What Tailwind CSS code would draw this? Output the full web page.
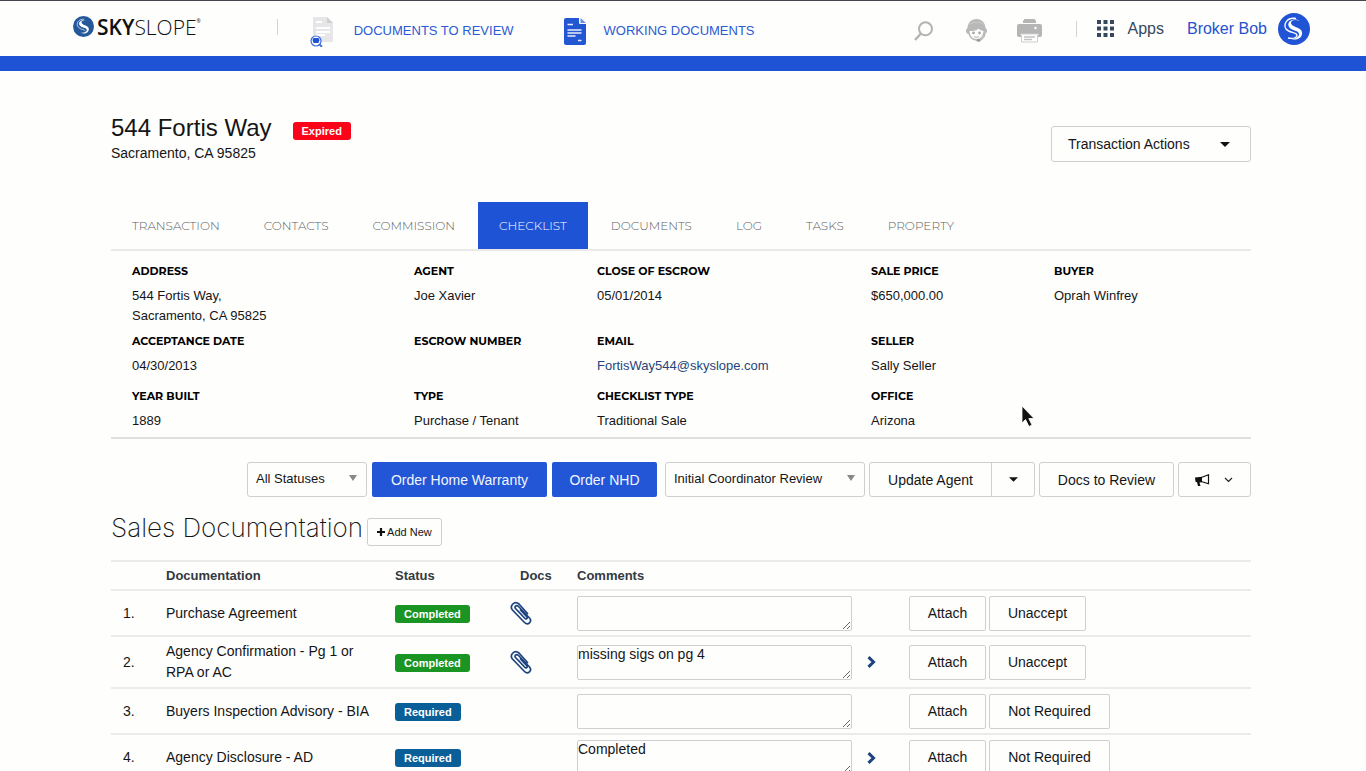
<!DOCTYPE html>
<html lang="en">
<head>
    <meta charset="UTF-8">
    <meta name="viewport" content="width=device-width, initial-scale=1.0">
    <title>544 Fortis Way - Checklist</title>
    <script src="https://cdn.jsdelivr.net/npm/@tailwindcss/browser@4"></script>
</head>
<body class="h-screen overflow-hidden bg-[#fefefd] font-['Liberation_Sans',Arial,sans-serif] text-[13px] leading-5 text-[#151515]">

    <!-- Header -->
    <header class="flex h-[56px] items-center justify-between border-t border-[#45454d] pl-[73px] pr-[56px]">
        <div class="flex items-center">
            <a href="#" class="flex items-center gap-[3px] pb-1 font-['Open_Sans',sans-serif] text-[21px] leading-6">
                <svg class="size-[21px]" viewBox="0 0 32 32" aria-hidden="true">
                    <circle cx="16" cy="16" r="16" fill="#25579b"/>
                    <path d="M21 8C14 4 7 9 10 14c2 4 12 3 11 8-1 3-6 4-10 3 7 4 14 0 13-6-1-5-11-5-11-9 0-3 4-4 8-2z" fill="#fff"/>
                    <path d="M17 5C8 4 4 12 8 17c3 4 10 3 11 6" fill="none" stroke="#fff" stroke-width="1"/>
                </svg>
                <span class="flex text-[#111]"><span class="font-semibold">SKY</span><span class="font-light">SLOPE</span><span class="text-[5px] leading-3">®</span></span>
            </a>
            <span class="mb-1 ml-[76px] h-4 w-px bg-[#d4d4d4]"></span>
            <nav class="flex items-center pt-[5px] text-[#2c5bd2]">
                <a href="#" class="ml-8 flex items-center gap-5">
                    <svg class="h-[31px] w-6" viewBox="0 0 24 31" aria-hidden="true">
                        <path d="M4 1h13l6 6v18a1 1 0 0 1-1 1H4a1 1 0 0 1-1-1V2a1 1 0 0 1 1-1z" fill="#e6e6e9"/>
                        <path d="M17 1v6h6z" fill="#cfcfd3"/>
                        <path d="M6 6h6M6 12h14M6 16h14M6 19h9" stroke="#fff" stroke-width="2"/>
                        <circle cx="6" cy="25" r="5" fill="#fff" stroke="#3b6ad9" stroke-width="1.2"/>
                        <path d="M3.500 22h5l1 2-1 3h-5l-1-3z" fill="#1f53d6"/>
                        <path d="M9.500 28.500l2.500 2.500" stroke="#3b6ad9" stroke-width="1.800"/>
                    </svg>
                    DOCUMENTS TO REVIEW
                </a>
                <a href="#" class="ml-[50px] flex items-center gap-[18px]">
                    <svg class="h-[27px] w-[22px]" viewBox="0 0 22 27" aria-hidden="true">
                        <path d="M2 0h13v5a1 1 0 0 0 1 1h6v19a2 2 0 0 1-2 2H2a2 2 0 0 1-2-2V2a2 2 0 0 1 2-2z" fill="#2356d3"/>
                        <path d="M16.500 0L22 5h-5.500z" fill="#6d90e4"/>
                        <path d="M3.500 6.500h5.500M3.500 12h14M3.500 15h14M3.500 18h8M14 22.500h3.500" stroke="#e8eefb" stroke-width="1.700"/>
                    </svg>
                    WORKING DOCUMENTS
                </a>
            </nav>
        </div>
        <div class="flex items-center text-base">
            <button type="button" aria-label="Search" class="pt-1">
                <svg class="size-5" viewBox="0 0 20 20" fill="none" stroke="#b3b3b3" aria-hidden="true">
                    <circle cx="11.500" cy="7.800" r="6.500" stroke-width="2"/>
                    <path d="M7 12.500L1 19" stroke-width="2.400"/>
                </svg>
            </button>
            <button type="button" aria-label="Support" class="ml-8 pt-1">
                <svg class="h-[23px] w-[21px]" viewBox="0 0 21 23" aria-hidden="true">
                    <path d="M10.500 0C5 0 2 3.500 1.500 9 .500 9.500 0 10.500 0 12s1 3 2.500 3c1 4 4 6.500 8 6.500S17.500 19 18.500 15c1.500 0 2.500-1.500 2.500-3s-.500-2.500-1.500-3C19 3.500 16 0 10.500 0z" fill="#b9b9b9"/>
                    <path d="M3.500 12c5 .500 8-1 9-2.500 1 1.500 3.500 2.500 5 2.500-.500 5-3 8-7 8s-6.500-3-7-8z" fill="#fff"/>
                    <circle cx="7.500" cy="14" r="1.400" fill="#aaa"/><circle cx="13.500" cy="14" r="1.400" fill="#aaa"/>
                    <path d="M8 17.500c1.500 1 3.500 1 5 0" fill="none" stroke="#aaa"/>
                    <path d="M19 15c-.500 4-3 6-6 6.500" fill="none" stroke="#aaa"/>
                    <ellipse cx="12.500" cy="21.500" rx="2.200" ry="1.300" fill="#999"/>
                    <path d="M3 5.500c4-3 11-3 15 0" fill="none" stroke="#cfcfcf" stroke-width=".8"/>
                </svg>
            </button>
            <button type="button" aria-label="Print" class="ml-[30px] pt-1">
                <svg class="h-6 w-[25px]" viewBox="0 0 25 24" aria-hidden="true">
                    <path d="M6 4V2l1.500-2h10L19 2v2z" fill="#b5b5b5"/>
                    <path d="M2 5h21a2 2 0 0 1 2 2v9a2 2 0 0 1-2 2H2a2 2 0 0 1-2-2V7a2 2 0 0 1 2-2z" fill="#b5b5b5"/>
                    <circle cx="18.500" cy="9" r="1.200" fill="#fff"/>
                    <path d="M4.500 15.500h16V23h-16z" fill="#fff" stroke="#cdcdcd"/>
                    <path d="M7 18h11M7 20.500h8" stroke="#c4c4c4" stroke-width="1.300"/>
                    <path d="M3.500 15.500h18" stroke="#e8e8e8" stroke-width="1.500"/>
                </svg>
            </button>
            <span class="ml-[34px] h-4 w-px bg-[#d4d4d4]"></span>
            <button type="button" class="ml-5 flex cursor-pointer items-center gap-[13px] text-[#34495e]">
                <svg class="size-[17px]" viewBox="0 0 17 17" fill="#34495e" aria-hidden="true">
                    <path d="M0 0h4v4H0zM6.500 0h4v4h-4zM13 0h4v4h-4zM0 6.500h4v4H0zM6.500 6.500h4v4h-4zM13 6.500h4v4h-4zM0 13h4v4H0zM6.500 13h4v4h-4zM13 13h4v4h-4z"/>
                </svg>
                Apps
            </button>
            <a href="#" class="ml-[23px] flex items-center gap-[11px] text-[#2453cf]">
                Broker Bob
                <svg class="size-8" viewBox="0 0 32 32" aria-hidden="true">
                    <circle cx="16" cy="16" r="16" fill="#2054d4"/>
                    <path d="M22 8C15 4 8 9 11 14c2 4 11 3 10 8-1 3-6 5-10 3 7 4 14 0 13-6-1-5-11-5-11-9 0-3 4-4 9-2z" fill="#fff"/>
                    <path d="M18 5.500C9 4 5 11 8 16c3 4 10 3 11 6 0 3-4 4-9 3" fill="none" stroke="#fff" stroke-width="1.300"/>
                </svg>
            </a>
        </div>
    </header>
    <div class="h-[15px] bg-[#1f53d6]"></div>

    <main class="pl-[111px] pr-[115px]">
        <!-- Property title -->
        <div class="flex items-start justify-between pt-[42px]">
            <div>
                <div class="flex items-center gap-[21px]">
                    <h1 class="text-[24px] leading-[30px]">544 Fortis Way</h1>
                    <span class="mt-1.5 rounded-[3px] bg-[#fb0319] px-[9px] text-[11px] font-bold leading-[18px] text-white">Expired</span>
                </div>
                <p class="text-sm leading-5">Sacramento, CA 95825</p>
            </div>
            <button type="button" class="mt-[13px] flex h-9 w-[200px] items-center justify-between rounded-[3px] border border-[#cfcfd2] pl-4 pr-5 text-sm">
                Transaction Actions
                <svg class="h-[5px] w-[10px]" viewBox="0 0 10 5" aria-hidden="true"><path d="M0 0h10L5 5z" fill="#111"/></svg>
            </button>
        </div>

        <!-- Tabs -->
        <nav class="mt-[39px] flex h-[49px] gap-[2px] border-b-2 border-[#e9e9ea] font-['Montserrat','Inter',sans-serif] text-[12px] font-light leading-[48px] text-[#5f5f63]">
            <a href="#" class="px-[21px]">TRANSACTION</a>
            <a href="#" class="px-[21px]">CONTACTS</a>
            <a href="#" class="px-[21px]">COMMISSION</a>
            <a href="#" class="bg-[#1f53d6] px-[21px] text-white">CHECKLIST</a>
            <a href="#" class="px-[21px]">DOCUMENTS</a>
            <a href="#" class="px-[21px]">LOG</a>
            <a href="#" class="px-[21px]">TASKS</a>
            <a href="#" class="px-[21px]">PROPERTY</a>
        </nav>

        <!-- Transaction summary -->
        <dl class="grid grid-cols-[282fr_183fr_274fr_183fr_197fr] gap-y-[5px] border-b-2 border-[#e0e0e0] pb-[6px] pl-[21px] pt-[10px] [&_dt]:mb-[5px] [&_dt]:font-['Montserrat','Inter',sans-serif] [&_dt]:text-[11px] [&_dt]:font-bold [&_dt]:text-black">
            <div><dt>ADDRESS</dt><dd>544 Fortis Way,<br>Sacramento, CA 95825</dd></div>
            <div><dt>AGENT</dt><dd>Joe Xavier</dd></div>
            <div><dt>CLOSE OF ESCROW</dt><dd>05/01/2014</dd></div>
            <div><dt>SALE PRICE</dt><dd>$650,000.00</dd></div>
            <div><dt>BUYER</dt><dd>Oprah Winfrey</dd></div>

            <div><dt>ACCEPTANCE DATE</dt><dd>04/30/2013</dd></div>
            <div><dt>ESCROW NUMBER</dt><dd></dd></div>
            <div><dt>EMAIL</dt><dd><a href="#" class="text-[#25457c]">FortisWay544@skyslope.com</a></dd></div>
            <div class="col-span-2"><dt>SELLER</dt><dd>Sally Seller</dd></div>

            <div class="mt-[5px]"><dt>YEAR BUILT</dt><dd>1889</dd></div>
            <div class="mt-[5px]"><dt>TYPE</dt><dd>Purchase / Tenant</dd></div>
            <div class="mt-[5px]"><dt>CHECKLIST TYPE</dt><dd>Traditional Sale</dd></div>
            <div class="col-span-2 mt-[5px]"><dt>OFFICE</dt><dd>Arizona</dd></div>
        </dl>

        <!-- Toolbar -->
        <div class="mt-[23px] flex justify-end gap-2 text-sm">
            <div class="flex gap-[5px]">
                <div class="relative">
                    <select aria-label="Status filter" class="h-[35px] w-[120px] appearance-none rounded-[3px] border border-[#cfcfd2] px-2 text-[13px]">
                        <option>All Statuses</option>
                    </select>
                    <svg class="pointer-events-none absolute right-[10px] top-[13px] h-[6px] w-2" viewBox="0 0 8 6" aria-hidden="true"><path d="M0 0h8L4 6z" fill="#888"/></svg>
                </div>
                <button type="button" class="h-[35px] w-[175px] rounded-[2px] bg-[#2356d6] text-[#f2f5fd]">Order Home Warranty</button>
                <button type="button" class="h-[35px] w-[105px] rounded-[2px] bg-[#2356d6] text-[#f2f5fd]">Order NHD</button>
            </div>
            <div class="flex gap-1">
                <div class="relative">
                    <select aria-label="Review stage" class="h-[35px] w-[200px] appearance-none rounded-[3px] border border-[#cfcfd2] px-2 text-[13px]">
                        <option>Initial Coordinator Review</option>
                    </select>
                    <svg class="pointer-events-none absolute right-[10px] top-[13px] h-[6px] w-2" viewBox="0 0 8 6" aria-hidden="true"><path d="M0 0h8L4 6z" fill="#888"/></svg>
                </div>
                <div class="flex h-[35px] rounded-[3px] border border-[#cfcfd2]">
                    <button type="button" class="w-[122px] border-r border-[#cfcfd2]">Update Agent</button>
                    <button type="button" aria-label="More agent actions" class="flex w-[42px] items-center justify-center">
                        <svg class="h-[5px] w-[9px]" viewBox="0 0 10 5" aria-hidden="true"><path d="M0 0h10L5 5z" fill="#111"/></svg>
                    </button>
                </div>
                <button type="button" class="h-[35px] w-[135px] rounded-[3px] border border-[#cfcfd2]">Docs to Review</button>
                <button type="button" aria-label="Announcements" class="flex h-[35px] w-[73px] items-center gap-[14px] rounded-[3px] border border-[#cfcfd2] pl-4">
                    <svg class="h-3 w-[15px]" viewBox="0 0 15 12" aria-hidden="true">
                        <path d="M0 3.500L7 2.800v5.400l-2.500.300 1 3.500H3L2 8.300.500 7.800z" fill="#111"/>
                        <path d="M7 3.300L13.500.800v9L7 7.800" fill="none" stroke="#111" stroke-width="1.200"/>
                    </svg>
                    <svg class="h-[6px] w-[9px]" viewBox="0 0 9 6" aria-hidden="true"><path d="M1 1l3.500 3.500L8 1" fill="none" stroke="#222" stroke-width="1.200"/></svg>
                </button>
            </div>
        </div>

        <!-- Checklist section -->
        <div class="mt-[13px] flex items-start gap-1">
            <h2 class="font-['Inter',sans-serif] text-[26px] font-extralight leading-9">Sales Documentation</h2>
            <button type="button" class="mt-2 flex h-7 items-center gap-[2px] rounded-[3px] border border-[#cfcfd2] px-[9px] text-[11px]">
                <svg class="size-2" viewBox="0 0 8 8" aria-hidden="true"><path d="M4 0v8M0 4h8" stroke="#111" stroke-width="2.200"/></svg>
                Add New
            </button>
        </div>

        <table class="mt-[14px] w-full table-fixed text-left [&_textarea]:block [&_textarea]:h-[35px] [&_textarea]:w-[275px] [&_textarea]:rounded-[2px] [&_textarea]:border [&_textarea]:border-[#cfcfd2] [&_textarea]:text-sm [&_textarea]:leading-4 [&_tr]:border-t-2 [&_tr]:border-[#ebebec]">
            <colgroup>
                <col class="w-[55px]">
                <col class="w-[229px]">
                <col class="w-[115px]">
                <col class="w-[67px]">
                <col class="w-[290px]">
                <col class="w-[42px]">
                <col>
            </colgroup>
            <thead>
                <tr class="h-[29px] text-[#333940]">
                    <th></th>
                    <th>Documentation</th>
                    <th>Status</th>
                    <th class="pl-[10px]">Docs</th>
                    <th>Comments</th>
                    <th></th>
                    <th></th>
                </tr>
            </thead>
            <tbody class="text-sm leading-[21px]">
                <tr class="h-[46px]">
                    <td class="pl-3">1.</td>
                    <td>Purchase Agreement</td>
                    <td><span class="inline-block rounded-[3px] bg-[#1a9423] px-[9px] text-[11px] font-bold leading-[18px] text-white">Completed</span></td>
                    <td><a href="#" aria-label="Attached documents"><svg class="h-6 w-[22px]" viewBox="0 0 22 24" fill="none" stroke="#1d437e" stroke-width="1.700" stroke-linecap="round" aria-hidden="true"><path d="M14.500 17L5.500 7.500C4 5.500 6.500 3.500 8.500 5.500l11 11.500c3 3.500-1.500 8-5 4.500L2.500 9C-.800 5 4.500-1 9 3l8.500 9.500M8 10l7 7.500c1 1.200 3-.300 1.800-1.800L10.500 9"/></svg></a></td>
                    <td><textarea aria-label="Comments for Purchase Agreement"></textarea></td>
                    <td></td>
                    <td>
                        <div class="flex gap-[3px]">
                            <button type="button" class="h-[35px] w-[77px] rounded-[2px] border border-[#cfcfd2]">Attach</button>
                            <button type="button" class="h-[35px] w-[97px] rounded-[2px] border border-[#cfcfd2]">Unaccept</button>
                        </div>
                    </td>
                </tr>
                <tr class="h-[52px]">
                    <td class="pl-3">2.</td>
                    <td class="pr-7">Agency Confirmation - Pg 1 or RPA or AC</td>
                    <td><span class="inline-block rounded-[3px] bg-[#1a9423] px-[9px] text-[11px] font-bold leading-[18px] text-white">Completed</span></td>
                    <td><a href="#" aria-label="Attached documents"><svg class="h-6 w-[22px]" viewBox="0 0 22 24" fill="none" stroke="#1d437e" stroke-width="1.700" stroke-linecap="round" aria-hidden="true"><path d="M14.500 17L5.500 7.500C4 5.500 6.500 3.500 8.500 5.500l11 11.500c3 3.500-1.500 8-5 4.500L2.500 9C-.800 5 4.500-1 9 3l8.500 9.500M8 10l7 7.500c1 1.200 3-.300 1.800-1.800L10.500 9"/></svg></a></td>
                    <td><textarea aria-label="Comments for Agency Confirmation">missing sigs on pg 4</textarea></td>
                    <td><a href="#" aria-label="Open comments"><svg class="h-3 w-[9px]" viewBox="0 0 9 12" aria-hidden="true"><path d="M1.500 1.200L6.500 6l-5 4.800" fill="none" stroke="#1d437e" stroke-width="3"/></svg></a></td>
                    <td>
                        <div class="flex gap-[3px]">
                            <button type="button" class="h-[35px] w-[77px] rounded-[2px] border border-[#cfcfd2]">Attach</button>
                            <button type="button" class="h-[35px] w-[97px] rounded-[2px] border border-[#cfcfd2]">Unaccept</button>
                        </div>
                    </td>
                </tr>
                <tr class="h-[46px]">
                    <td class="pl-3">3.</td>
                    <td>Buyers Inspection Advisory - BIA</td>
                    <td><span class="inline-block rounded-[3px] bg-[#0b5f98] px-[9px] text-[11px] font-bold leading-[18px] text-white">Required</span></td>
                    <td></td>
                    <td><textarea aria-label="Comments for Buyers Inspection Advisory"></textarea></td>
                    <td></td>
                    <td>
                        <div class="flex gap-[3px]">
                            <button type="button" class="h-[35px] w-[77px] rounded-[2px] border border-[#cfcfd2]">Attach</button>
                            <button type="button" class="h-[35px] w-[121px] rounded-[2px] border border-[#cfcfd2]">Not Required</button>
                        </div>
                    </td>
                </tr>
                <tr class="h-[46px]">
                    <td class="pl-3">4.</td>
                    <td>Agency Disclosure - AD</td>
                    <td><span class="inline-block rounded-[3px] bg-[#0b5f98] px-[9px] text-[11px] font-bold leading-[18px] text-white">Required</span></td>
                    <td></td>
                    <td><textarea aria-label="Comments for Agency Disclosure">Completed</textarea></td>
                    <td><a href="#" aria-label="Open comments"><svg class="h-3 w-[9px]" viewBox="0 0 9 12" aria-hidden="true"><path d="M1.500 1.200L6.500 6l-5 4.800" fill="none" stroke="#1d437e" stroke-width="3"/></svg></a></td>
                    <td>
                        <div class="flex gap-[3px]">
                            <button type="button" class="h-[35px] w-[77px] rounded-[2px] border border-[#cfcfd2]">Attach</button>
                            <button type="button" class="h-[35px] w-[121px] rounded-[2px] border border-[#cfcfd2]">Not Required</button>
                        </div>
                    </td>
                </tr>
            </tbody>
        </table>
    </main>

    <!-- Mouse pointer -->
    <svg class="pointer-events-none absolute left-[1021px] top-[405px] h-[23px] w-[14px]" viewBox="0 0 14 23" aria-hidden="true">
        <path d="M1 1v17l3.500-3.500L8 21.500l3-1.500-3.200-6.500H13z" fill="#111" stroke="#fff" stroke-width=".8"/>
    </svg>
</body>
</html>
